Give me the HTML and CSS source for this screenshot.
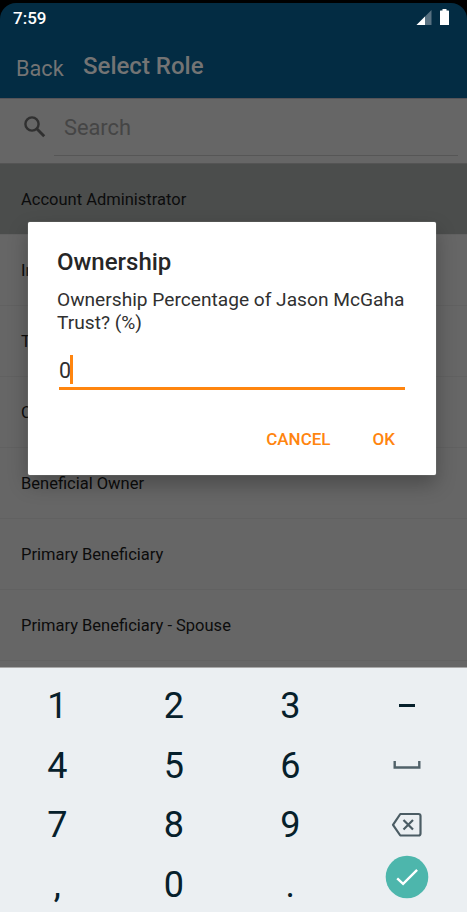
FILE: index.html
```html
<!DOCTYPE html>
<html lang="en">
<head>
<meta charset="utf-8">
<title>Select Role</title>
<link rel="stylesheet" href="styles.css">
</head>
<body>
<div class="screen">
  <header class="header">
    <div class="status">
      <span class="clock">7:59</span>
      <svg class="status-icons" width="34" height="17" viewBox="0 0 34 17">
        <path d="M15.5 1v15H0.5z" fill="#587181"/>
        <path d="M9 7.5V16H.5z" fill="#fff"/>
        <path d="M24.5 1.5h2V0h4v1.5h2q.5 0 .5.5v14h-9V2q0-.5.5-.5z" fill="#fff"/>
      </svg>
    </div>
    <nav class="nav">
      <span class="back">Back</span>
      <span class="heading">Select Role</span>
    </nav>
  </header>
  <div class="search">
    <svg class="search-icon" width="22" height="22" viewBox="0 0 22 22" fill="none" stroke="#303030">
      <circle cx="8" cy="8" r="6.6" stroke-width="2.4"/>
      <path d="M12.8 12.8l7.4 7.4" stroke-width="2.9"/>
    </svg>
    <div class="search-field">Search</div>
  </div>
  <main class="roles">
    <div class="role selected">Account Administrator</div>
    <div class="role">Individual</div>
    <div class="role">Trustee</div>
    <div class="role">Custodian</div>
    <div class="role">Beneficial Owner</div>
    <div class="role">Primary Beneficiary</div>
    <div class="role">Primary Beneficiary - Spouse</div>
  </main>
  <section class="keyboard">
    <span class="key">1</span><span class="key">2</span><span class="key">3</span>
    <span class="key"><svg width="16" height="3"><path d="M0 0h16v3H0z" fill="#06202b"/></svg></span>
    <span class="key">4</span><span class="key">5</span><span class="key">6</span>
    <span class="key space"><svg width="28" height="8" viewBox="0 0 28 8" fill="none" stroke="#506169" stroke-width="2.4"><path d="M1.7 0v6.5h24.6V0"/></svg></span>
    <span class="key">7</span><span class="key">8</span><span class="key">9</span>
    <span class="key"><svg width="32" height="26" viewBox="0 0 32 26" fill="none" stroke="#4b5c64" stroke-width="2.2"><path d="M9.3 2h18.2q2 0 2 2v17.5q0 2-2 2H9.3L2 12.8z" stroke-linejoin="round"/><path d="M12.5 8l9.5 9.5M22 8l-9.5 9.5"/></svg></span>
    <span class="key">,</span><span class="key">0</span><span class="key">.</span>
    <span class="key enter"><svg width="44" height="44" viewBox="0 0 44 44"><circle cx="22" cy="22" r="21.3" fill="#4db6ac"/><path d="M12.2 23.3l5.9 5.6 14-14" fill="none" stroke="#fff" stroke-width="2.4"/></svg></span>
  </section>
  <div class="dialog">
    <h1 class="dialog-title">Ownership</h1>
    <p class="message">Ownership Percentage of Jason McGaha Trust? (%)</p>
    <div class="input"><span class="value">0</span><span class="caret"></span></div>
    <div class="actions"><span class="cancel">CANCEL</span><span class="ok">OK</span></div>
  </div>
</div>
</body>
</html>
```
FILE: styles.css
```css
* { box-sizing: border-box; }
body {
  margin: 0;
  background: #000;
  font-family: Roboto, "Liberation Sans", sans-serif;
}
.screen {
  position: relative;
  width: 467px;
  height: 912px;
  padding-top: 3px;
  overflow: hidden;
  background: #000;
}
.header {
  height: 95px;
  background: #032c43;
  border-radius: 16px 16px 0 0;
}
.status {
  display: flex;
  justify-content: space-between;
  height: 36px;
  padding: 5px 17px 0 13px;
}
.clock {
  color: #fff;
  font-size: 17px;
  font-weight: 500;
  line-height: 20px;
}
.status-icons { margin-top: 1px; }
.nav {
  display: flex;
  align-items: flex-start;
  padding-left: 16px;
  color: #747474;
}
.back {
  width: 67px;
  padding-top: 17px;
  font-size: 21.7px;
  line-height: 26px;
}
.heading {
  padding-top: 13px;
  font-size: 24px;
  font-weight: 500;
  line-height: 28px;
}
.search {
  display: flex;
  height: 65px;
  padding: 0 9px 0 24px;
  background: #666;
  border-top: 1px solid #555358;
}
.search-icon { margin-top: 17px; }
.search-field {
  flex: 1;
  height: 57px;
  margin-left: 8px;
  padding-left: 10px;
  border-bottom: 1px solid #565656;
  color: #454545;
  font-size: 21.8px;
  line-height: 58px;
}
.roles {
  height: 504px;
  overflow: hidden;
  background: #666;
}
.role {
  height: 71px;
  padding-left: 21px;
  border-bottom: 1px solid #616161;
  color: #0c0c0c;
  font-size: 16.5px;
  line-height: 71px;
}
.role:nth-child(n+5) { line-height: 72px; }
.selected {
  height: 72px;
  border-top: 1px solid #545454;
  background: #4b4d4c;
}
.keyboard {
  display: grid;
  grid-template-columns: repeat(4, 116.5px);
  grid-auto-rows: 59.7px;
  height: 245px;
  padding-top: 8px;
  border-top: 1px solid #a8a8a8;
  background: #ebeff2;
}
.key {
  display: flex;
  align-items: center;
  justify-content: center;
  margin-left: -2px;
  color: #06202b;
  font-size: 36px;
}
.space { padding-bottom: 2px; }
.enter { padding-bottom: 16px; }
.dialog {
  position: absolute;
  top: 222px;
  left: 28px;
  width: 408px;
  height: 253px;
  padding: 25px 29px 0;
  border-radius: 2px;
  background: #fff;
  box-shadow: 0 0 1px #bfc5c2, 0 9px 20px rgba(0, 0, 0, .28);
  color: #262626;
}
.dialog-title {
  margin: 0;
  font-size: 24px;
  font-weight: 500;
  line-height: 30px;
}
.message {
  margin: 11px -3px 0 0;
  color: #303030;
  font-size: 19.15px;
  line-height: 23px;
}
.input {
  display: flex;
  height: 35px;
  margin: 21px 2px 0;
  border-bottom: 3px solid #ff850f;
  color: #303030;
  font-size: 21.5px;
  line-height: 32px;
}
.value { width: 11px; }
.caret {
  width: 3px;
  height: 29px;
  background: #ff850f;
}
.actions {
  display: flex;
  justify-content: flex-end;
  gap: 42px;
  margin-top: 38px;
  padding-right: 12px;
  color: #ff850f;
  font-size: 17px;
  font-weight: 500;
  line-height: 22px;
}
```
